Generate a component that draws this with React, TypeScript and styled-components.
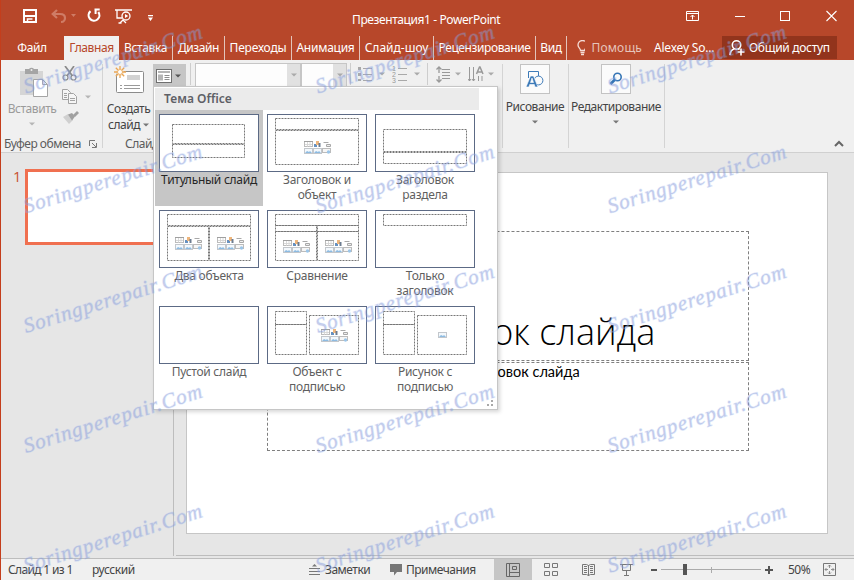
import React from "react";
import styled, { createGlobalStyle } from "styled-components";

const Global = createGlobalStyle`
  * { box-sizing: border-box; }
  html, body { margin: 0; padding: 0; overflow: hidden; }
  body { font-family: "Noto Sans", "Open Sans", sans-serif; font-size: 12px; color: #444; }
`;

const Window = styled.div`
  position: relative;
  width: 854px;
  height: 580px;
  display: flex;
  flex-direction: column;
  overflow: hidden;
  background: #e6e6e6;
  border-left: 1px solid #c43e1c;
`;

/* ---------- title bar ---------- */
const TitleBar = styled.header`
  height: 36px;
  flex: none;
  background: #b7472a;
  color: #fff;
  display: grid;
  grid-template-columns: 351px 331px 1fr;
`;
const QuickAccess = styled.div`
  display: flex;
  align-items: flex-start;
  padding: 8px 0 0 21px;
`;
const WindowTitle = styled.div`
  padding-top: 12px;
  line-height: 16px;
  white-space: nowrap;
  letter-spacing: -0.4px;
`;
const WindowButtons = styled.div`
  display: flex;
  align-items: flex-start;
  padding: 8px 0 0 1px;
`;
const Slot = styled.span<{ $w: number }>`
  width: ${(p) => p.$w}px;
  flex: none;
  display: flex;
`;

/* ---------- tabs ---------- */
const TabBar = styled.nav`
  height: 24px;
  flex: none;
  background: #b7472a;
  display: flex;
  color: #fff;
`;
const Tab = styled.div<{ $w: number; $active?: boolean; $sep?: boolean; $ls?: number }>`
  width: ${(p) => p.$w}px;
  height: 24px;
  flex: none;
  display: flex;
  align-items: center;
  justify-content: center;
  line-height: 24px;
  white-space: nowrap;
  letter-spacing: ${(p) => p.$ls ?? -0.4}px;
  background: ${(p) => (p.$active ? "#f0f0f0" : "transparent")};
  color: ${(p) => (p.$active ? "#b7472a" : "#fff")};
  border-right: ${(p) => (p.$sep ? "1px solid #e3c4bb" : "0")};
`;
const TellMe = styled.div`
  width: 65px;
  margin: 0 0 0 10px;
  height: 24px;
  flex: none;
  display: flex;
  align-items: center;
  gap: 7px;
  overflow: hidden;
  white-space: nowrap;
  color: #e6c4bb;
  letter-spacing: 0.15px;
  line-height: 24px;
`;
const Account = styled.div`
  width: 80px;
  padding-left: 12px;
  line-height: 24px;
  white-space: nowrap;
  letter-spacing: -0.2px;
`;
const Share = styled.div`
  width: 115px;
  height: 23px;
  background: #92341c;
  display: flex;
  align-items: center;
  gap: 4px;
  padding-left: 7px;
  white-space: nowrap;
  letter-spacing: -0.3px;
`;

/* ---------- ribbon ---------- */
const Ribbon = styled.section`
  height: 93px;
  flex: none;
  background: #f0f0f0;
  border-bottom: 1px solid #d0d0d0;
  display: flex;
`;
const Group = styled.div<{ $w: number }>`
  width: ${(p) => p.$w}px;
  flex: none;
  display: flex;
  flex-direction: column;
`;
const GroupBody = styled.div`
  height: 76px;
  display: flex;
`;
const GroupLabel = styled.div<{ $pad: number; $ls?: number }>`
  height: 16px;
  line-height: 16px;
  padding-left: ${(p) => p.$pad}px;
  white-space: nowrap;
  display: flex;
  align-items: center;
  gap: 8px;
  color: #5c5c5c;
  letter-spacing: ${(p) => p.$ls ?? -0.5}px;
`;
const Divider = styled.div<{ $h: number }>`
  width: 1px;
  height: ${(p) => p.$h}px;
  margin-top: 4px;
  flex: none;
  background: #d4d4d4;
`;
const BigButton = styled.div<{ $w: number; $top: number; $muted?: boolean; $ls?: number }>`
  width: ${(p) => p.$w}px;
  flex: none;
  padding: ${(p) => p.$top}px 1px 0 0;
  display: flex;
  flex-direction: column;
  align-items: center;
  color: ${(p) => (p.$muted ? "#9b9b9b" : "#444")};
  letter-spacing: ${(p) => p.$ls ?? -0.45}px;
  line-height: 16px;
  white-space: nowrap;
`;
const Line = styled.span<{ $gap?: number }>`
  display: flex;
  align-items: center;
  gap: 3px;
  margin-top: ${(p) => p.$gap ?? 0}px;
`;
const IconFrame = styled.span`
  width: 30px;
  height: 30px;
  border: 1px solid #c3c3c3;
  background: #fbfbfb;
  display: flex;
  align-items: center;
  justify-content: center;
  margin-bottom: 5px;
`;
const SmallIcons = styled.div`
  display: flex;
  flex-direction: column;
  gap: 6px;
  margin-left: -2px;
  padding-top: 6px;
`;
const ToolRow = styled.div`
  height: 26px;
  display: flex;
  align-items: center;
  padding-top: 2px;
`;
const LayoutButton = styled.div`
  width: 33px;
  height: 23px;
  margin: 3px 3px 0 0;
  background: #c6c6c6;
  display: flex;
  align-items: center;
  gap: 3px;
  padding-left: 3px;
  flex: none;
`;
const Combo = styled.div<{ $w: number }>`
  width: ${(p) => p.$w}px;
  height: 24px;
  margin-top: 2px;
  flex: none;
  border: 1px solid #c6c6c6;
  background: #fdfdfd;
  display: flex;
  justify-content: flex-end;
`;
const ComboArrow = styled.span`
  width: 13px;
  background: #e1e1e1;
  display: flex;
  align-items: center;
  justify-content: center;
`;
const ToolDivider = styled.i<{ $m: string }>`
  width: 1px;
  height: 22px;
  margin: ${(p) => p.$m};
  background: #cdcdcd;
  flex: none;
`;
const Collapse = styled.div`
  flex: 1;
  display: flex;
  justify-content: flex-end;
  align-items: flex-end;
  padding: 0 10px 4px 0;
`;

/* ---------- work area ---------- */
const Work = styled.main`
  height: 405px;
  flex: none;
  display: flex;
`;
const SlidePane = styled.aside`
  width: 173px;
  height: 403px;
  border-right: 1px solid #bdbdbd;
  display: flex;
  padding: 16px 0 0 12px;
  gap: 4px;
`;
const SlideNumber = styled.span`
  width: 8px;
  color: #c8512f;
  font-size: 14.5px;
  line-height: 15px;
  font-family: "Open Sans", sans-serif;
`;
const SlideThumb = styled.div`
  width: 137px;
  height: 76px;
  border: 3px solid #f07050;
  background: #fff;
`;
const Canvas = styled.div`
  flex: 1;
  height: 403px;
  margin-left: 2px;
  border-bottom: 1px solid #bdbdbd;
  padding: 19px 0 0 10px;
`;
const Slide = styled.div`
  width: 642px;
  height: 362px;
  border: 1px solid #c6c6c6;
  background: #fff;
  display: flex;
  flex-direction: column;
  align-items: center;
  padding: 58px 0 0 2px;
`;
const Placeholder = styled.div<{ $h: number }>`
  width: 482px;
  height: ${(p) => p.$h}px;
  margin-bottom: 1px;
  border: 1px dashed #7f7f7f;
  color: #000;
  text-align: center;
  white-space: nowrap;
`;
const TitleText = styled.div`
  font-family: "Open Sans", "Noto Sans", sans-serif;
  font-weight: 300;
  font-size: 36px;
  line-height: 48px;
  padding: 76px 5px 0 0;
`;
const SubtitleText = styled.div`
  font-family: Lato, "Noto Sans", sans-serif;
  font-size: 14.5px;
  line-height: 18px;
  padding-right: 2px;
`;

/* ---------- layout gallery ---------- */
const Gallery = styled.div`
  position: absolute;
  left: 152px;
  top: 86px;
  width: 345px;
  height: 324px;
  background: #fff;
  border: 1px solid #c6c6c6;
  box-shadow: 2px 2px 4px rgba(0, 0, 0, 0.16);
  padding: 1px 0 0 1px;
`;
const GalleryHeader = styled.div`
  width: 324px;
  height: 22px;
  background: #ebebeb;
  color: #5e6066;
  font-weight: 600;
  line-height: 22px;
  padding-left: 9px;
`;
const GalleryGrid = styled.div`
  display: grid;
  grid-template-columns: repeat(3, 108px);
  grid-auto-rows: 96px;
`;
const GalleryItem = styled.div<{ $selected?: boolean }>`
  background: ${(p) => (p.$selected ? "#c6c6c6" : "transparent")};
  color: ${(p) => (p.$selected ? "#262626" : "#5f5f5f")};
  padding-top: 4px;
  display: flex;
  flex-direction: column;
  align-items: center;
  line-height: 15px;
  text-align: center;
  white-space: pre;
  letter-spacing: -0.27px;
`;
const Preview = styled.svg`
  width: 100px;
  height: 58px;
  background: #fff;
  border: 1px solid #5c6a85;
  flex: none;
`;
const Grip = styled.div`
  display: flex;
  justify-content: flex-end;
  padding: 0 3px 0 0;
  margin-top: 2px;
`;

/* ---------- status bar ---------- */
const Status = styled.footer`
  height: 22px;
  flex: none;
  background: #f0f0f0;
  border-top: 1px solid #bdbdbd;
  display: flex;
  align-items: center;
  color: #444;
`;
const Cell = styled.span<{ $w: number; $ls?: number; $active?: boolean; $pad?: number }>`
  width: ${(p) => p.$w}px;
  height: 21px;
  flex: none;
  display: flex;
  align-items: center;
  padding-left: ${(p) => p.$pad ?? 0}px;
  white-space: nowrap;
  letter-spacing: ${(p) => p.$ls ?? -0.5}px;
  background: ${(p) => (p.$active ? "#c6c6c6" : "transparent")};
`;

const WatermarkLayer = styled.svg`
  position: absolute;
  left: -1px;
  top: 0;
  pointer-events: none;
`;

const Arrow = ({ c = "#777" }: { c?: string }) => (
  <svg width="6" height="4" viewBox="0 0 6 4"><path d="M0 0.5h6L3 3.5z" fill={c} /></svg>
);

/* dashed placeholder rectangles: [x, y, w, h]; icon clusters: [x, y] */
type Layout = {
  name: string;
  boxes: number[][];
  clusters?: number[][];
  picture?: number[];
};
const layouts: Layout[] = [
  { name: "Титульный слайд", boxes: [[13, 10, 72, 19], [13, 30, 72, 13]] },
  { name: "Заголовок и\nобъект", boxes: [[8, 4, 83, 11], [8, 16, 83, 34]], clusters: [[36, 26]] },
  { name: "Заголовок\nраздела", boxes: [[8, 15, 83, 22], [8, 38, 83, 11]] },
  { name: "Два объекта", boxes: [[8, 4, 83, 11], [8, 16, 41, 34], [50, 16, 41, 34]], clusters: [[15, 26], [57, 26]] },
  { name: "Сравнение", boxes: [[8, 4, 83, 11], [8, 15, 41, 6], [50, 15, 41, 6], [8, 21, 41, 29], [50, 21, 41, 29]], clusters: [[15, 29], [57, 29]] },
  { name: "Только\nзаголовок", boxes: [[8, 4, 83, 11]] },
  { name: "Пустой слайд", boxes: [] },
  { name: "Объект с\nподписью", boxes: [[8, 5, 31, 13], [8, 18, 31, 30], [42, 9, 49, 39]], clusters: [[53, 22]] },
  { name: "Рисунок с\nподписью", boxes: [[8, 5, 31, 13], [8, 18, 31, 30], [42, 9, 49, 39]], picture: [62, 25] },
];

const MiniPicture = ({ x, y }: { x: number; y: number }) => (
  <g transform={`translate(${x} ${y})`}>
    <rect x=".5" y=".5" width="8" height="5" fill="#f3f8fc" stroke="#c3c7cc" />
    <path d="M1 5l2-2 2 1 1-1 2 2z" fill="#8dbbe2" />
  </g>
);
const Cluster = ({ x, y }: { x: number; y: number }) => (
  <g transform={`translate(${x} ${y})`}>
    <rect x=".5" y=".5" width="8" height="5" fill="#fff" stroke="#bcbcbc" />
    <path d="M0 .5h9" stroke="#a0a0a0" /><path d="M3.500 1v5M6 1v5M1 3.500h7" stroke="#d0d0d0" strokeWidth=".8" />
    <path d="M10 3h3v3h-3z" fill="#6690bf" /><path d="M12 0h3v4h-3z" fill="#efb67c" /><path d="M14.500 2h2v4h-2z" fill="#6c7c90" />
    <path d="M19.500 1.500h5M22.500 3.500h4v2h-4z" fill="#eee" stroke="#a8a8a8" />
    <MiniPicture x={0} y={7} />
    <MiniPicture x={9} y={7} />
    <rect x="18.500" y="7.500" width="8" height="4" fill="#f6f6f6" stroke="#bcbcbc" />
    <circle cx="24.500" cy="11" r="1.700" fill="#9cc5e8" />
  </g>
);

const Watermarks = () => (
  <WatermarkLayer width="854" height="580" viewBox="0 0 854 580">
    {[0, 1, 2, 3, 4].flatMap((r) =>
      [0, 1, 2].map((c) => (
        <text
          key={`${r}-${c}`}
          transform={`translate(${26 + c * 292} ${93.5 + r * 119.8}) rotate(-17.500)`}
          textLength="186"
          lengthAdjust="spacing"
          fontFamily="Liberation Serif, serif"
          fontStyle="italic"
          fontSize="21"
          fill="#8490d0"
          fillOpacity=".42"
          stroke="#8fb0ee"
          strokeOpacity=".22"
          strokeWidth="1.400"
        >
          Soringperepair.Com
        </text>
      ))
    )}
  </WatermarkLayer>
);

const SaveIcon = () => (
  <svg width="16" height="16" fill="none" stroke="#fff" strokeWidth="2">
    <path d="M2 2h12v12H2z" /><path d="M2 8h12" /><path d="M5.500 14v-3h5" strokeWidth="1.500" />
  </svg>
);
const UndoIcon = () => (
  <svg width="16" height="16" fill="none" stroke="#cf7c66" strokeWidth="2.200">
    <path d="M6 2L1.700 6 6 10M2 6h7c4 0 5 2.500 5 4s-1 4-4 4" />
  </svg>
);
const RedoIcon = () => (
  <svg width="16" height="16" fill="none" stroke="#fff" strokeWidth="2.200">
    <path d="M4.500 3.200A5.400 5.400 0 1 0 12.300 4" /><path d="M8.500 1.500h5.200M9.600 1v5" strokeWidth="2" />
  </svg>
);
const ShowIcon = () => (
  <svg width="18" height="17" fill="none" stroke="#fff" strokeWidth="1.300">
    <path d="M0 2h17M2 2v8h5M5 15l3-3 3 3M3.500 15h3" /><circle cx="11" cy="8" r="4" /><path d="M10 6l3.200 2L10 10z" fill="#fff" stroke="none" />
  </svg>
);
const PersonIcon = () => (
  <svg width="16" height="18" fill="none" stroke="#fff" strokeWidth="1.600">
    <circle cx="7.500" cy="6" r="4.200" /><path d="M1 16c.3-3.500 2-5.500 4.500-6.200M9 9.800l1.500.8M12 9.500v7M8.500 13h7" />
  </svg>
);
const BulbIcon = () => (
  <svg width="11" height="16" fill="none" stroke="#f5dcd5" strokeWidth="1.300">
    <path d="M3.500 10.500C3.500 8.500 1 7.700 1 5a4.500 4.500 0 0 1 9 0c0 2.700-2.500 3.500-2.500 5.500zM3.500 12.500h4M4 14.500h3" />
  </svg>
);
const PasteIcon = () => (
  <svg width="32" height="31" viewBox="-4 0 32 31">
    <path d="M0 4h23v24H0z" fill="#d5d5d5" /><path d="M5 2h4a3 3 0 0 1 5 0h4v5H5z" fill="#a5a5a5" /><circle cx="11.500" cy="3" r="1" fill="#eee" />
    <path d="M13.500 12.500h9l5 5v12h-14z" fill="#fff" stroke="#a5a5a5" /><path d="M22.500 12.500v5h5" fill="none" stroke="#a5a5a5" />
  </svg>
);
const CutIcon = () => (
  <svg width="16" height="15" fill="none" stroke="#8a8a8a" strokeWidth="1.700">
    <path d="M3 0l7.500 10M12 0L5 10" /><circle cx="3.500" cy="11.500" r="2.500" strokeWidth="1.200" /><circle cx="11.500" cy="11.500" r="2.500" strokeWidth="1.200" />
  </svg>
);
const CopyIcon = () => (
  <svg width="16" height="15" fill="#f6f6f6" stroke="#a3a3a3">
    <path d="M.5.5h5l3 3v7h-8z" /><path d="M6.500 4.500h5l3 3v7h-8z" /><path d="M2 4.500h3M2 6.500h3M2 8.500h3M8 9.500h5M8 11.500h5" />
  </svg>
);
const BrushIcon = () => (
  <svg width="17" height="14">
    <path d="M1 6l5-3 5 6-4 4z" fill="#d0d0d0" /><path d="M6 3.500l4-1.500 3 3.500-3 4z" fill="#a0a0a0" /><path d="M11 4l4-4 2 2-4 4z" fill="#a0a0a0" />
  </svg>
);
const NewSlideIcon = () => (
  <svg width="30" height="28">
    <rect x="2.500" y="5.500" width="27" height="21" rx="1" fill="#fff" stroke="#8c8c8c" />
    <path d="M13 9h13v5H13z" fill="#d2d2d2" /><path d="M6 19.500h2M10 19.500h16M6 22.500h2M10 22.500h16" stroke="#9a9a9a" />
    <circle cx="6" cy="6" r="4" fill="#f5eadb" />
    <path d="M6 0v12M0 6h12M1.800 1.800l8.400 8.400M10.200 1.800l-8.400 8.400" stroke="#eaa654" strokeWidth="1.300" /><circle cx="6" cy="6" r="2" fill="#fff" />
  </svg>
);
const LayoutIcon = () => (
  <svg width="16" height="14">
    <rect x=".5" y=".5" width="15" height="13" fill="#fff" stroke="#6f6f6f" />
    <path d="M2 2h12v2H2zM2 5.500h5v6H2z" fill="#b5b5b5" /><path d="M8.500 6.500h5M8.500 8.500h5M8.500 10.500h5" stroke="#8d8d8d" />
  </svg>
);
const BulletsIcon = () => (
  <svg width="14" height="16">
    <path d="M0 1h3v3H0zM0 7h3v3H0zM0 13h3v2H0z" fill="#a9a9a9" /><path d="M5 2.500h9M5 8.500h9M5 14.500h9" stroke="#a9a9a9" />
  </svg>
);
const NumberingIcon = () => (
  <svg width="16" height="17" fontSize="7" fill="#999" fontFamily="Liberation Sans">
    <text x="0" y="5">1</text><text x="0" y="11">2</text><text x="0" y="17">3</text>
    <path d="M6 2.500h9M6 8.500h9M6 14.500h9" stroke="#a9a9a9" />
  </svg>
);
const SpacingIcon = () => (
  <svg width="15" height="17" fill="none" stroke="#999">
    <path d="M3 1v6M3 10v6M.500 3.500L3 1l2.500 2.500M.500 13.500L3 16l2.500-2.500" strokeWidth="1.300" /><path d="M6 3.500h8M6 6.500h8M6 9.500h8M6 12.500h8" />
  </svg>
);
const DirectionIcon = () => (
  <svg width="16" height="17" fill="none" stroke="#999">
    <path d="M1.500 1v14M5.500 1v14M0 13l1.500 2L3 13M4 13l1.500 2L7 13M10.500 10v5M14 10v5" /><path d="M8.500 8l3-7h.5l3 7M9.500 6h5" strokeWidth="1.500" />
  </svg>
);
const DrawIcon = () => (
  <svg width="18" height="18">
    <path d="M2.500 8V1.500h10V6" fill="none" stroke="#3c7ab8" /><circle cx="12.500" cy="10.500" r="4.400" fill="none" stroke="#3c7ab8" />
    <path d="M0 17L4.500 6h3L12 17H9l-.7-2.500H3.700L3 17zM4.500 12.500h3L6 8z" fill="#3c7ab8" stroke="#fff" strokeWidth=".6" />
  </svg>
);
const FindIcon = () => (
  <svg width="14" height="14" fill="none" stroke="#3575b5">
    <circle cx="8.500" cy="5" r="3.700" strokeWidth="1.600" /><path d="M6 7.500L1.500 12" strokeWidth="2.600" />
  </svg>
);

export default function App() {
  return (
    <>
      <Global />
      <Window>
        <TitleBar>
          <QuickAccess>
            <Slot $w={29}><SaveIcon /></Slot>
            <Slot $w={20}><UndoIcon /></Slot>
            <Slot $w={15}><svg width="6" height="16"><path d="M0 6h5L2.500 9z" fill="#cf7c66" /></svg></Slot>
            <Slot $w={29}><RedoIcon /></Slot>
            <Slot $w={33}><ShowIcon /></Slot>
            <Slot $w={10}><svg width="6" height="16"><path d="M0 7h5v1.200H0zM0 9.500h5L2.500 13z" fill="#fff" /></svg></Slot>
          </QuickAccess>
          <WindowTitle>Презентация1 - PowerPoint</WindowTitle>
          <WindowButtons>
            <Slot $w={50}>
              <svg width="18" height="16" fill="none" stroke="#fff"><path d="M2.500 3.500h12v9h-12zM2.500 5.500h12M8.500 11.500V7M6.500 9l2-2 2 2" /></svg>
            </Slot>
            <Slot $w={46}><svg width="14" height="16"><path d="M1 8.500h10" stroke="#fff" /></svg></Slot>
            <Slot $w={46}><svg width="14" height="16"><rect x=".5" y="3.500" width="9" height="9" fill="none" stroke="#fff" /></svg></Slot>
            <Slot $w={20}><svg width="12" height="16"><path d="M.5 3l10 10M10.500 3l-10 10" stroke="#fff" strokeWidth="1.100" /></svg></Slot>
          </WindowButtons>
        </TitleBar>
        <TabBar>
          <Tab $w={62}>Файл</Tab>
          <Slot $w={1} />
          <Tab $w={55} $active>Главная</Tab>
          <Tab $w={54} $sep $ls={-0.35}>Вставка</Tab>
          <Tab $w={52} $sep>Дизайн</Tab>
          <Tab $w={67} $sep $ls={-0.2}>Переходы</Tab>
          <Tab $w={68} $sep $ls={-0.25}>Анимация</Tab>
          <Tab $w={74} $sep $ls={0}>Слайд-шоу</Tab>
          <Tab $w={102} $sep>Рецензирование</Tab>
          <Tab $w={31} $sep>Вид</Tab>
          <TellMe><BulbIcon />Помощь</TellMe>
          <Account>Alexey So...</Account>
          <Share><PersonIcon />Общий доступ</Share>
        </TabBar>
        <Ribbon>
          <Group $w={101}>
            <GroupBody>
              <BigButton $w={63} $top={7} $muted>
                <PasteIcon />
                <Line $gap={3}>Вставить</Line>
                <Line $gap={5}><Arrow c="#b5b5b5" /></Line>
              </BigButton>
              <SmallIcons>
                <Line><CutIcon /></Line>
                <Line $gap={2}><CopyIcon /><Slot $w={1} /><Arrow c="#b5b5b5" /></Line>
                <Line $gap={1}><BrushIcon /></Line>
              </SmallIcons>
            </GroupBody>
            <GroupLabel $pad={3}>
              Буфер обмена
              <svg width="8" height="8" fill="none" stroke="#777"><path d="M.5 6V.5H6M3 3l4 4M7.500 3v4.500H3" /></svg>
            </GroupLabel>
          </Group>
          <Divider $h={84} />
          <Group $w={50}>
            <GroupBody>
              <BigButton $w={52} $top={6}>
                <NewSlideIcon />
                <Line $gap={7}>Создать</Line>
                <Line>слайд <Arrow /></Line>
              </BigButton>
            </GroupBody>
            <GroupLabel $pad={22}>Слайды</GroupLabel>
          </Group>
          <Group $w={349}>
            <ToolRow>
              <LayoutButton><LayoutIcon /><Arrow c="#555" /></LayoutButton>
              <ToolDivider $m="0 4px 0 1px" />
              <Combo $w={106}><ComboArrow><Arrow c="#aaa" /></ComboArrow></Combo>
              <Combo $w={46}><ComboArrow><Arrow c="#aaa" /></ComboArrow></Combo>
              <ToolDivider $m="0 7px 0 3px" />
              <Slot $w={21}><BulletsIcon /></Slot>
              <Slot $w={13}><Arrow c="#aaa" /></Slot>
              <Slot $w={22}><NumberingIcon /></Slot>
              <Slot $w={13}><Arrow c="#aaa" /></Slot>
              <ToolDivider $m="0 8px 0 0" />
              <Slot $w={19}><SpacingIcon /></Slot>
              <Slot $w={13}><Arrow c="#aaa" /></Slot>
              <Slot $w={20}><DirectionIcon /></Slot>
              <Slot $w={12}><Arrow c="#aaa" /></Slot>
            </ToolRow>
          </Group>
          <Divider $h={84} />
          <BigButton $w={65} $top={4}>
            <IconFrame><DrawIcon /></IconFrame>
            <Line>Рисование</Line>
            <Line $gap={5}><Arrow /></Line>
          </BigButton>
          <Divider $h={84} />
          <BigButton $w={95} $top={4}>
            <IconFrame><FindIcon /></IconFrame>
            <Line>Редактирование</Line>
            <Line $gap={5}><Arrow /></Line>
          </BigButton>
          <Divider $h={84} />
          <Collapse>
            <svg width="10" height="8" fill="none" stroke="#666" strokeWidth="2"><path d="M1 6l4-4 4 4" /></svg>
          </Collapse>
        </Ribbon>
        <Work>
          <SlidePane>
            <SlideNumber>1</SlideNumber>
            <SlideThumb />
          </SlidePane>
          <Canvas>
            <Slide>
              <Placeholder $h={130}><TitleText>Заголовок слайда</TitleText></Placeholder>
              <Placeholder $h={89}><SubtitleText>Подзаголовок слайда</SubtitleText></Placeholder>
            </Slide>
          </Canvas>
        </Work>
        <Status>
          <Cell $w={84} $pad={7} $ls={-0.65}>Слайд 1 из 1</Cell>
          <Cell $w={224} $pad={7} $ls={-0.4}>русский</Cell>
          <Cell $w={16}>
            <svg width="11" height="13" stroke="#777"><path d="M3 3.500L5.500 1 8 3.500z" fill="#777" stroke="none" /><path d="M0 5.500h11M0 8.500h11M0 11.500h11" /></svg>
          </Cell>
          <Cell $w={65}>Заметки</Cell>
          <Cell $w={16}>
            <svg width="12" height="12"><path d="M0 0h12v8H7l-3 3.500V8H0z" fill="#777" /></svg>
          </Cell>
          <Cell $w={88}>Примечания</Cell>
          <Cell $w={38} $pad={12} $active>
            <svg width="14" height="14" fill="none" stroke="#666"><path d="M.5.5h13v13H.5zM3.500.5v13M3.500 9.500h10M6.500 3.500h4v3h-4z" /></svg>
          </Cell>
          <Cell $w={38} $pad={12}>
            <svg width="14" height="14" fill="none" stroke="#777"><path d="M.5.5h5v4h-5zM8.500.5h5v4h-5zM.5 8.500h5v4h-5zM8.500 8.500h5v4h-5z" /></svg>
          </Cell>
          <Cell $w={38} $pad={12}>
            <svg width="14" height="14" fill="none" stroke="#777"><path d="M.5 1.500h4l2 1 2-1h4v10h-4l-2 1-2-1h-4zM6.500 2v11M2 3.500h3M2 5.500h3M2 7.500h3M2 9.500h3M8 3.500h3M8 5.500h3M8 7.500h3M8 9.500h3" /></svg>
          </Cell>
          <Cell $w={43} $pad={12}>
            <svg width="14" height="14" fill="none" stroke="#777"><path d="M0 1.500h13M2.500 2v5.500h8V2M6.500 7.500v5M4 12.500h5" /></svg>
          </Cell>
          <Cell $w={10}>
            <svg width="6" height="8"><path d="M0 3h6v2H0z" fill="#555" /></svg>
          </Cell>
          <Cell $w={104}>
            <svg width="101" height="12"><path d="M0 5.500h100M50.500 3v6" stroke="#ababab" /><path d="M22 0h4v11h-4z" fill="#555" /></svg>
          </Cell>
          <Cell $w={23}>
            <svg width="9" height="8"><path d="M0 3h8v2H0zM3 0h2v8H3z" fill="#555" /></svg>
          </Cell>
          <Cell $w={35}>50%</Cell>
          <Cell $w={14}>
            <svg width="14" height="14" fill="none" stroke="#777"><path d="M.5.5h12v12H.5z" /><path d="M6.500 2v3M6.500 8v3M2 6.500h3M8 6.500h3M5 3.500l1.500-1.500L8 3.500M5 9.500l1.500 1.500L8 9.500M3.500 5L2 6.500 3.500 8M9.500 5L11 6.500 9.500 8" strokeWidth=".8" /></svg>
          </Cell>
        </Status>

        <Gallery>
          <GalleryHeader>Тема Office</GalleryHeader>
          <GalleryGrid>
            {layouts.map((l, i) => (
              <GalleryItem key={l.name} $selected={i === 0}>
                <Preview viewBox="1 1 98 56">
                  {l.boxes.map(([x, y, w, h], k) => (
                    <rect key={k} x={x + 0.5} y={y + 0.5} width={w} height={h} fill="none" stroke="#777" strokeDasharray="2 1" />
                  ))}
                  {l.clusters?.map(([x, y], k) => <Cluster key={k} x={x + 1} y={y + 1} />)}
                  {l.picture && <MiniPicture x={l.picture[0] + 1} y={l.picture[1] + 1} />}
                </Preview>
                {l.name}
              </GalleryItem>
            ))}
          </GalleryGrid>
          <Grip>
            <svg width="8" height="8" fill="#a9a9a9"><path d="M5 0h2v2H5zM5 4h2v2H5zM1 4h2v2H1z" /></svg>
          </Grip>
        </Gallery>
        <Watermarks />
      </Window>
    </>
  );
}
